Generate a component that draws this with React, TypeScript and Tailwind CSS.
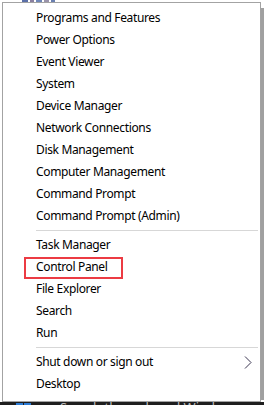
import React from "react";

type Item = { label: string; arrow?: boolean; boxed?: boolean };

const groups: Item[][] = [
  [
    { label: "Programs and Features" },
    { label: "Power Options" },
    { label: "Event Viewer" },
    { label: "System" },
    { label: "Device Manager" },
    { label: "Network Connections" },
    { label: "Disk Management" },
    { label: "Computer Management" },
    { label: "Command Prompt" },
    { label: "Command Prompt (Admin)" },
  ],
  [
    { label: "Task Manager" },
    { label: "Control Panel", boxed: true },
    { label: "File Explorer" },
    { label: "Search" },
    { label: "Run" },
  ],
  [{ label: "Shut down or sign out", arrow: true }, { label: "Desktop" }],
];

function Row({ item }: { item: Item }) {
  return (
    <div className="relative flex h-[22px] items-center pl-[33px] pr-[10px]">
      <span className="leading-none tracking-[-0.35px]">{item.label}</span>
      {item.arrow && (
        <svg
          className="absolute right-[8px] top-[5px]"
          width="8"
          height="13"
          viewBox="0 0 8 13"
        >
          <path d="M1 0.5 L7 6.5 L1 12.5" fill="none" stroke="#3a3550" strokeWidth="1" />
        </svg>
      )}
      {item.boxed && (
        <div className="pointer-events-none absolute left-[21px] top-[1px] h-[22px] w-[99px] border-2 border-[#ec3b43]" />
      )}
    </div>
  );
}

export default function App() {
  return (
    <div
      className="relative flex h-[405px] w-[264px] flex-col overflow-hidden bg-white text-[12px] text-black"
      style={{ fontFamily: '"Noto Sans", "Open Sans", sans-serif' }}
    >
      <div className="relative h-[2px] shrink-0">
        <div className="absolute left-[22px] top-0 flex h-[2px] gap-[2px]">
          <div className="h-[2px] w-[6px] bg-[#5b6fa8]" />
          <div className="h-[2px] w-[4px] bg-[#8a7fa0]" />
          <div className="h-[2px] w-[6px] bg-[#6f86b8]" />
          <div className="h-[2px] w-[5px] bg-[#9a93ab]" />
          <div className="h-[2px] w-[4px] bg-[#6a7fb0]" />
        </div>
      </div>
      <div className="flex shrink-0">
        <div className="w-[2px]" />
        <div className="flex h-[400px] w-[259px] flex-col border border-[#a3a3a3] bg-white pt-[4px]">
          {groups.map((g, gi) => (
            <div key={gi} className="flex flex-col">
              {gi > 0 && (
                <div className="flex h-[7px] items-center pl-[33px] pr-[2px]">
                  <div className="h-px w-full bg-[#d7d7d7]" />
                </div>
              )}
              {g.map((it) => (
                <Row key={it.label} item={it} />
              ))}
            </div>
          ))}
        </div>
        <div className="flex flex-col">
          <div className="h-[6px]" />
          <div className="h-[392px] w-[3px] bg-[#a0a0a0]" />
        </div>
      </div>
      <div className="flex h-[3px] shrink-0 items-start overflow-hidden bg-[#1e1e1e]">
        <div className="ml-[16px] flex gap-[1px] pt-[1px]">
          <div className="h-[6px] w-[7px] bg-[#2a7bd6]" />
          <div className="h-[6px] w-[7px] bg-[#2a7bd6]" />
        </div>
        <span className="ml-[29px] mt-[-1px] text-[13px] leading-none text-[#bdbdbd]">
          Search the web and Windows
        </span>
      </div>
    </div>
  );
}
